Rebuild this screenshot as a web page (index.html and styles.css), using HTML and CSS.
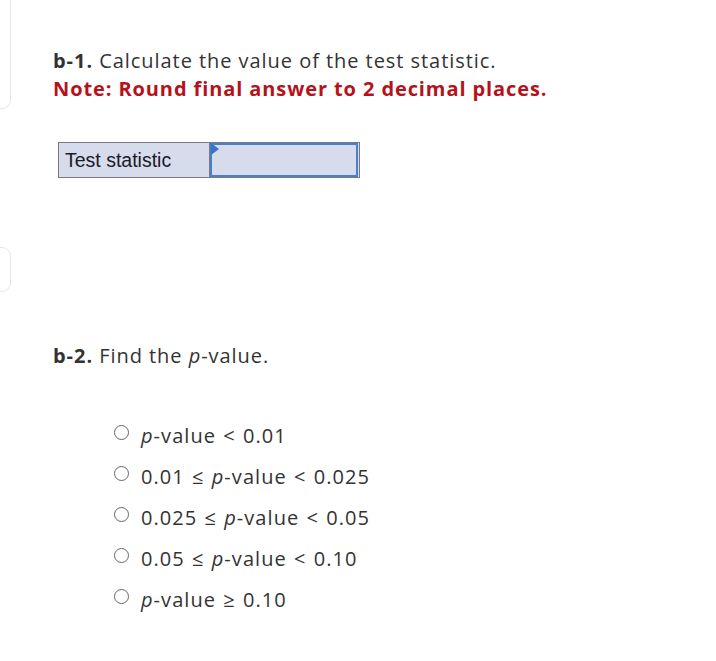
FILE: index.html
```html
<!DOCTYPE html>
<html>
<head>
<meta charset="utf-8">
<link rel="stylesheet" href="styles.css">
</head>
<body>
<div class="page">
  <div class="rail">
    <div class="card card-top"></div>
    <div class="card card-mid"></div>
  </div>
  <main class="content">
    <section class="part">
      <p class="prompt"><b>b-1.</b> Calculate the value of the test statistic.</p>
      <p class="note">Note: Round final answer to 2 decimal places.</p>
      <table class="answer">
        <tr>
          <td class="label">Test statistic</td>
          <td class="field"><div class="input"><span class="flag"></span></div></td>
        </tr>
      </table>
    </section>
    <section class="part part2">
      <p class="prompt"><b>b-2.</b> Find the <i>p</i>-value.</p>
      <ul class="options">
        <li><span class="radio"></span><span><i>p</i>-value &lt; 0.01</span></li>
        <li><span class="radio"></span><span>0.01 ≤ <i>p</i>-value &lt; 0.025</span></li>
        <li><span class="radio"></span><span>0.025 ≤ <i>p</i>-value &lt; 0.05</span></li>
        <li><span class="radio"></span><span>0.05 ≤ <i>p</i>-value &lt; 0.10</span></li>
        <li><span class="radio"></span><span><i>p</i>-value ≥ 0.10</span></li>
      </ul>
    </section>
  </main>
</div>
</body>
</html>
```
FILE: styles.css
```css
html, body {
  margin: 0;
  padding: 0;
  background: #fff;
}
.page {
  display: flex;
  width: 716px;
  height: 661px;
  overflow: hidden;
}
.rail {
  width: 11px;
  flex: none;
  display: flex;
  flex-direction: column;
}
.card {
  border: 1px solid #e6e6e6;
  border-left: none;
  border-radius: 0 9px 9px 0;
  width: 10px;
}
.card-top {
  margin-top: -20px;
  height: 127px;
}
.card-mid {
  margin-top: 138px;
  height: 43px;
}
.content {
  padding: 47px 0 0 42px;
  font-family: "Open Sans", "Lato", sans-serif;
  color: #333;
}
.prompt, .note {
  margin: 0;
  font-size: 20px;
  line-height: 28px;
  letter-spacing: 0.95px;
}
.prompt b {
  font-weight: 700;
}
.note {
  color: #b5121b;
  font-weight: 700;
  letter-spacing: 0.9px;
}
.answer {
  border-collapse: collapse;
  margin: 39px 0 0 5px;
  border: 1px solid #7a7a7a;
}
.answer td {
  padding: 0;
  background: #d6dcec;
  height: 34px;
}
.label {
  width: 144px;
  padding-left: 6px !important;
  font-family: "Liberation Sans", Arial, sans-serif;
  font-size: 19.5px;
  letter-spacing: 0;
  color: #1a1a28;
  border-right: 1px solid #7a7a7a;
}
.field {
  width: 149px;
}
.input {
  position: relative;
  height: 30px;
  margin: 0 1px 0 0;
  border: 2px solid #4a7fcb;
}
.flag {
  position: absolute;
  left: -1px;
  top: -1px;
  width: 0;
  height: 0;
  border-top: 6px solid transparent;
  border-bottom: 6px solid transparent;
  border-left: 8px solid #3a74c8;
  transform: translateY(-1px);
}
.part2 {
  margin-top: 164px;
}
.part2 .prompt i, .options i {
  font-style: italic;
}
.options {
  list-style: none;
  margin: 45px 0 0 59px;
  padding: 0;
}
.options li {
  display: flex;
  align-items: center;
  height: 41px;
  font-size: 20px;
  letter-spacing: 1.05px;
  word-spacing: 1px;
}
.radio {
  width: 13px;
  height: 13px;
  border: 1px solid #666;
  border-radius: 50%;
  margin: 0 12px 0 2px;
  flex: none;
  position: relative;
  top: -3px;
}
```
